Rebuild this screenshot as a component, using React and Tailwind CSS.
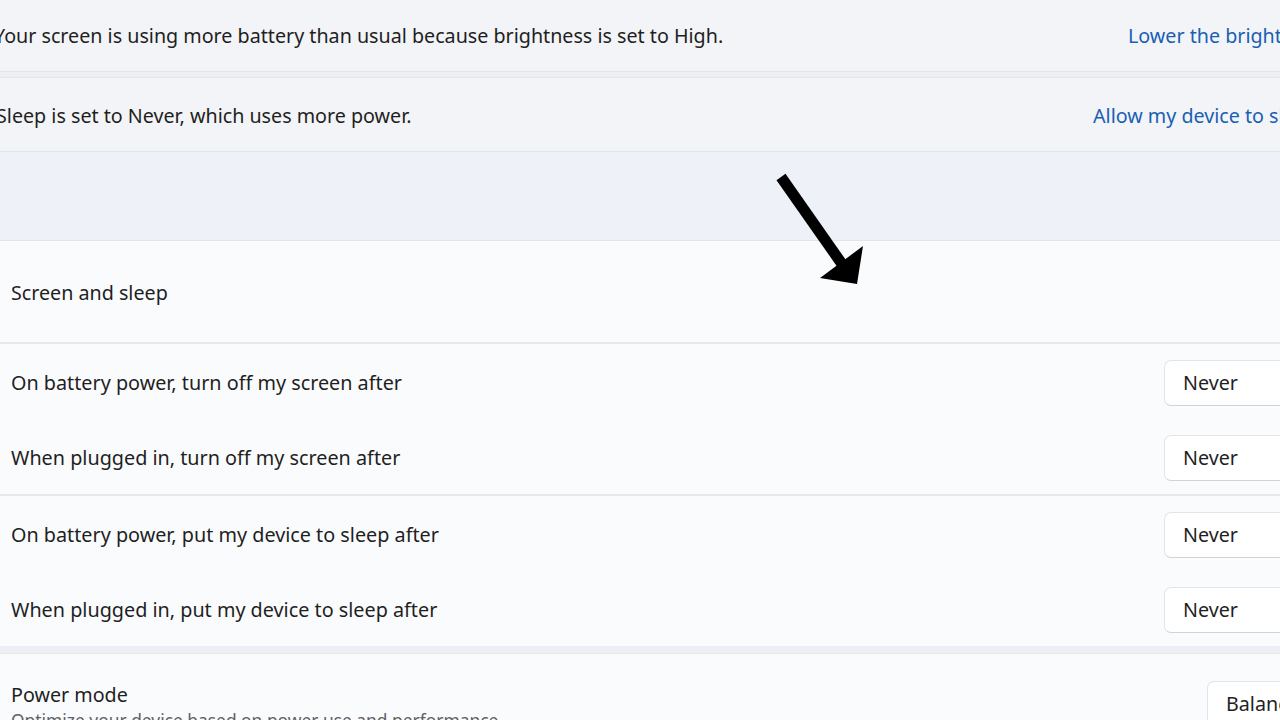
import React from "react";

const font = { fontFamily: '"Noto Sans", "Open Sans", sans-serif' };

function Dropdown({ value, className = "" }) {
  return (
    <div
      className={`h-[46px] w-[140px] shrink-0 rounded-[7px] border border-[#e3e4e8] border-b-[#d2d3d8] bg-white pl-[18px] flex items-center text-[19.7px] text-[#1f1f1f] ${className}`}
    >
      {value}
    </div>
  );
}

function SettingRow({ label }) {
  return (
    <div className="h-[75px] flex items-center justify-between pl-[11px] pt-[3px]">
      <span className="text-[19.8px] text-[#1f1f1f]">{label}</span>
      <Dropdown value="Never" className="-mr-[24px]" />
    </div>
  );
}

export default function App() {
  return (
    <div
      className="relative w-[1280px] h-[720px] overflow-hidden bg-[#eceff3] whitespace-nowrap"
      style={font}
    >
      {/* recommendation rows */}
      <div className="h-[72px] bg-[#f3f4f7] border-b border-[#e2e4e8] flex items-center justify-between -ml-[6px]">
        <span className="text-[19.7px] text-[#1f1f1f]">
          Your screen is using more battery than usual because brightness is set to High.
        </span>
        <span className="w-[160px] shrink-0 -mr-[8px] text-[19.7px] text-[#1a5fb4]">Lower the brightness</span>
      </div>
      <div className="mt-[5px] h-[75px] bg-[#f3f4f7] border-t border-b border-[#e2e4e8] flex items-center justify-between -ml-[4px] pt-[2px]">
        <span className="text-[19.7px] text-[#1f1f1f]">Sleep is set to Never, which uses more power.</span>
        <span className="w-[190px] shrink-0 -mr-[3px] text-[19.7px] text-[#1a5fb4]">Allow my device to sleep</span>
      </div>

      <div className="h-[89px] bg-[#eef2f8] border-b border-[#e2e4e8]" />

      {/* Screen and sleep */}
      <div className="h-[103px] bg-[#fafbfd] border-b-2 border-[#e6e8ec] flex items-center pl-[11px] pt-[3px]">
        <span className="text-[19.7px] text-[#1f1f1f]">Screen and sleep</span>
      </div>

      <div className="bg-[#fafbfd] border-b-2 border-[#e6e8ec]">
        <SettingRow label="On battery power, turn off my screen after" />
        <SettingRow label="When plugged in, turn off my screen after" />
      </div>
      <div className="bg-[#fafbfd]">
        <SettingRow label="On battery power, put my device to sleep after" />
        <SettingRow label="When plugged in, put my device to sleep after" />
      </div>

      {/* Power mode */}
      <div className="mt-[7px] h-[80px] bg-[#fafbfd] border-t border-[#e6e8ec] flex items-start justify-between pl-[11px] pt-[27px]">
        <div className="flex flex-col">
          <span className="text-[19.7px] leading-[28px] text-[#1f1f1f]">Power mode</span>
          <span className="text-[17.4px] leading-[22px] text-[#5f6166]">
            Optimize your device based on power use and performance
          </span>
        </div>
        <Dropdown value="Balanced" className="-mr-[67px]" />
      </div>

      {/* annotation arrow */}
      <svg
        className="absolute left-0 top-0 pointer-events-none"
        width="1280"
        height="720"
        viewBox="0 0 1280 720"
      >
        <line x1="781" y1="177" x2="842" y2="264" stroke="#000" strokeWidth="11" />
        <polygon points="820,278 863,246 857,284" fill="#000" />
      </svg>
    </div>
  );
}
